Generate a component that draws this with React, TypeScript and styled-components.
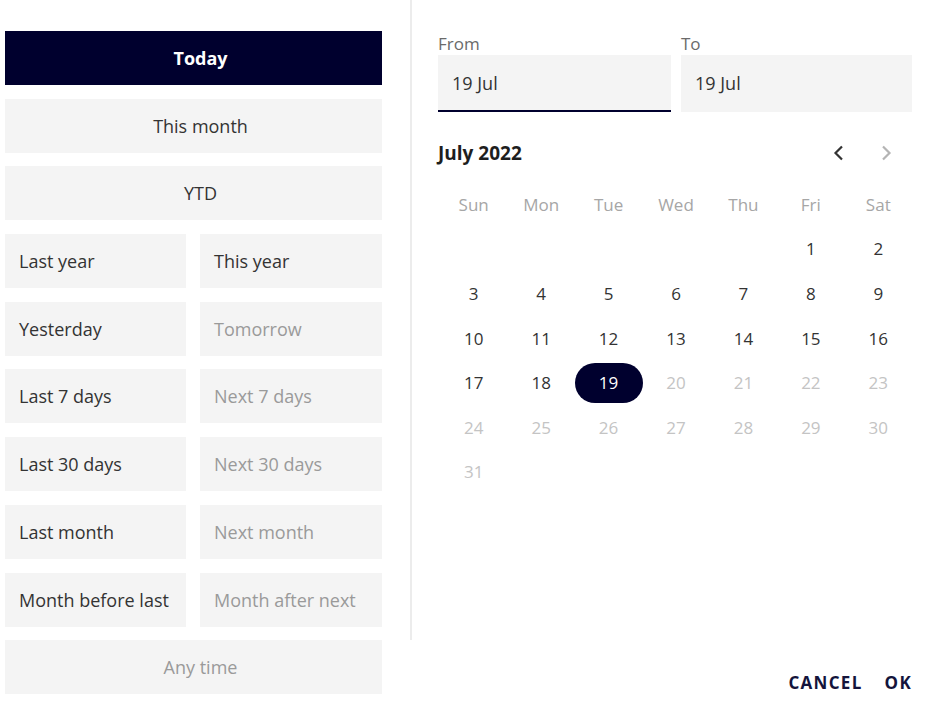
import React from "react"
import styled, { createGlobalStyle } from "styled-components"

const NAVY = "#00002e"

const GlobalStyle = createGlobalStyle`
  html, body {
    margin: 0;
    padding: 0;
    background: #ffffff;
    font-family: "Open Sans", "Noto Sans", sans-serif;
  }
  * {
    box-sizing: border-box;
  }
`

type Preset = { label: string; full?: boolean; active?: boolean; muted?: boolean }

const presets: Preset[] = [
  { label: "Today", full: true, active: true },
  { label: "This month", full: true },
  { label: "YTD", full: true },
  { label: "Last year" },
  { label: "This year" },
  { label: "Yesterday" },
  { label: "Tomorrow", muted: true },
  { label: "Last 7 days" },
  { label: "Next 7 days", muted: true },
  { label: "Last 30 days" },
  { label: "Next 30 days", muted: true },
  { label: "Last month" },
  { label: "Next month", muted: true },
  { label: "Month before last" },
  { label: "Month after next", muted: true },
  { label: "Any time", full: true, muted: true },
]

const weekdays = ["Sun", "Mon", "Tue", "Wed", "Thu", "Fri", "Sat"]

function ChevronLeft({ color }: { color: string }) {
  return (
    <svg width="14" height="18" viewBox="0 0 14 18">
      <path d="M10 2.5 L3.5 9 L10 15.5" fill="none" stroke={color} strokeWidth="2.2" />
    </svg>
  )
}

function ChevronRight({ color }: { color: string }) {
  return (
    <svg width="14" height="18" viewBox="0 0 14 18">
      <path d="M4 2.5 L10.5 9 L4 15.5" fill="none" stroke={color} strokeWidth="2.2" />
    </svg>
  )
}

export default function App() {
  // July 2022 starts on a Friday
  const cells: (number | null)[] = [null, null, null, null, null]
  for (let d = 1; d <= 31; d++) cells.push(d)

  return (
    <Page>
      <GlobalStyle />
      <PresetGrid>
        {presets.map((p) => (
          <PresetButton key={p.label} $full={p.full} $active={p.active} $muted={p.muted}>
            {p.label}
          </PresetButton>
        ))}
      </PresetGrid>

      <RightColumn>
        <CalendarPanel>
          <Inputs>
            <Field>
              <FieldLabel>From</FieldLabel>
              <FieldBox $focused>19 Jul</FieldBox>
            </Field>
            <Field>
              <FieldLabel>To</FieldLabel>
              <FieldBox>19 Jul</FieldBox>
            </Field>
          </Inputs>

          <MonthHeader>
            <MonthTitle>July 2022</MonthTitle>
            <NavButtons>
              <NavButton>
                <ChevronLeft color="#333333" />
              </NavButton>
              <NavButton>
                <ChevronRight color="#b4b4b4" />
              </NavButton>
            </NavButtons>
          </MonthHeader>

          <DayGrid>
            {weekdays.map((w) => (
              <Weekday key={w}>{w}</Weekday>
            ))}
            {cells.map((d, i) => (
              <DayCell key={i}>
                {d !== null && (
                  <Day $selected={d === 19} $disabled={d > 19}>
                    {d}
                  </Day>
                )}
              </DayCell>
            ))}
          </DayGrid>
        </CalendarPanel>

        <Footer>
          <TextButton>CANCEL</TextButton>
          <TextButton>OK</TextButton>
        </Footer>
      </RightColumn>
    </Page>
  )
}

const Page = styled.div`
  display: grid;
  grid-template-columns: 410px 1fr;
  width: 927px;
  height: 709px;
  overflow: hidden;
`

const PresetGrid = styled.div`
  display: grid;
  grid-template-columns: 181px 182px;
  grid-auto-rows: 54px;
  column-gap: 14px;
  row-gap: 13.7px;
  padding: 31px 0 0 5px;
  align-content: start;
`

const PresetButton = styled.div<{ $full?: boolean; $active?: boolean; $muted?: boolean }>`
  grid-column: ${(p) => (p.$full ? "1 / -1" : "auto")};
  display: flex;
  align-items: center;
  justify-content: ${(p) => (p.$full ? "center" : "flex-start")};
  padding: ${(p) => (p.$full ? "0 0 0 14px" : "0 14px")};
  background: ${(p) => (p.$active ? NAVY : "#f4f4f4")};
  color: ${(p) => (p.$active ? "#ffffff" : p.$muted ? "#9a9a9a" : "#333333")};
  font-size: 18px;
  font-weight: ${(p) => (p.$active ? 700 : 400)};
  white-space: nowrap;
`

const RightColumn = styled.div`
  display: flex;
  flex-direction: column;
`

const CalendarPanel = styled.div`
  height: 640px;
  border-left: 2px solid #ececec;
  padding: 32px 15px 0 26px;
`

const Inputs = styled.div`
  display: grid;
  grid-template-columns: 233px 231px;
  column-gap: 10px;
`

const Field = styled.div`
  display: flex;
  flex-direction: column;
`

const FieldLabel = styled.div`
  font-size: 17px;
  line-height: 23px;
  color: #6a6a6a;
`

const FieldBox = styled.div<{ $focused?: boolean }>`
  height: 57px;
  display: flex;
  align-items: center;
  padding: 0 14px;
  background: #f4f4f4;
  border-bottom: 2px solid ${(p) => (p.$focused ? NAVY : "transparent")};
  font-size: 18px;
  color: #333333;
`

const MonthHeader = styled.div`
  display: flex;
  align-items: center;
  justify-content: space-between;
  height: 40px;
  margin-top: 21px;
`

const MonthTitle = styled.div`
  font-size: 19px;
  font-weight: 700;
  color: #1e1e1e;
`

const NavButtons = styled.div`
  display: flex;
  gap: 29px;
  padding-right: 17px;
`

const NavButton = styled.div`
  width: 18px;
  display: flex;
  justify-content: center;
`

const DayGrid = styled.div`
  display: grid;
  width: 472px;
  grid-template-columns: repeat(7, minmax(0, 1fr));
  grid-auto-rows: 44.6px;
  margin: 9px 0 0 2px;
`

const Weekday = styled.div`
  display: flex;
  align-items: center;
  justify-content: center;
  font-size: 17px;
  color: #a6a6a6;
`

const DayCell = styled.div`
  display: flex;
  align-items: center;
  justify-content: center;
`

const Day = styled.div<{ $selected?: boolean; $disabled?: boolean }>`
  flex: 0 0 68px;
  height: 40px;
  border-radius: 20px;
  display: flex;
  align-items: center;
  justify-content: center;
  font-size: 17px;
  background: ${(p) => (p.$selected ? NAVY : "transparent")};
  color: ${(p) => (p.$selected ? "#ffffff" : p.$disabled ? "#c4c4c4" : "#333333")};
`

const Footer = styled.div`
  display: flex;
  justify-content: flex-end;
  align-items: center;
  gap: 22px;
  height: 84px;
  padding-right: 15px;
`

const TextButton = styled.div`
  font-size: 17px;
  font-weight: 700;
  letter-spacing: 1.3px;
  color: #14143c;
`
